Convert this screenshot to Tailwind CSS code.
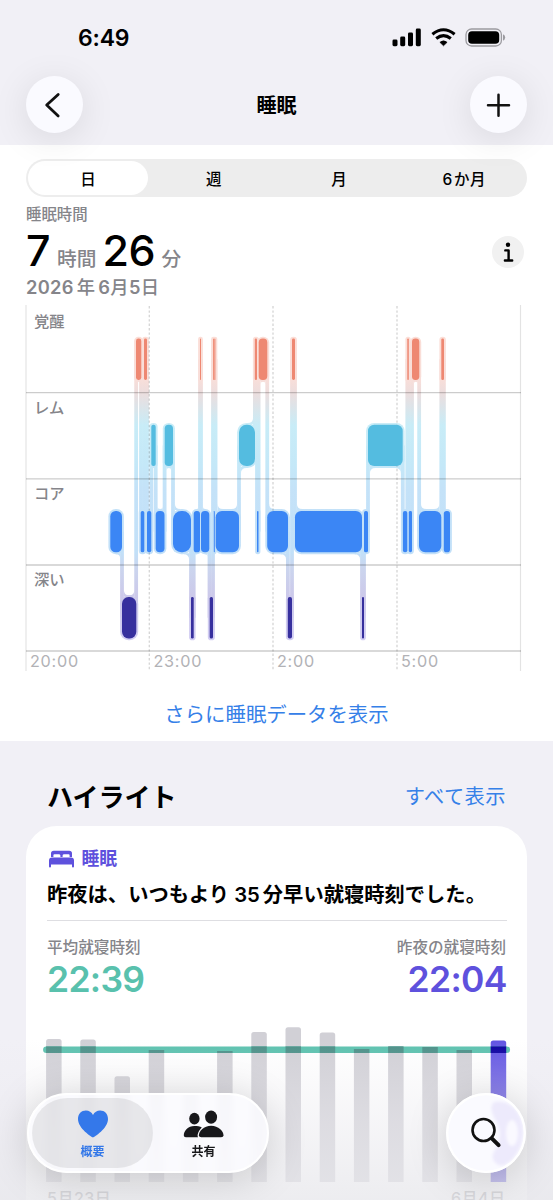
<!DOCTYPE html>
<html lang="ja">
<head>
<meta charset="utf-8">
<title>睡眠</title>
<script src="https://cdn.jsdelivr.net/npm/@tailwindcss/browser@4"></script>
</head>
<body class="bg-[#f1f0f6] font-['Inter','Noto_Sans_CJK_JP',sans-serif] text-black">
<div class="relative flex h-[1200px] w-[553px] flex-col overflow-hidden">

  <header class="relative z-10 h-[145px] shrink-0">
    <div class="flex h-[75.5px] items-center justify-between pl-[78px] pr-[47px]">
      <span class="pt-[2px] text-[23px] font-semibold leading-none tracking-[-0.2px]">6:49</span>
      <div class="flex items-center gap-[9px]">
        <svg width="30" height="19" viewBox="0 0 30 19"><rect x="0.5" y="11.5" width="5" height="6.7" rx="1.4"/><rect x="8.2" y="8.6" width="5" height="9.6" rx="1.4"/><rect x="16" y="4.6" width="5" height="13.6" rx="1.4"/><rect x="23.8" y="0.6" width="5" height="17.6" rx="1.4"/></svg>
        <svg width="25" height="19" viewBox="0 0 25 19"><path d="M12.5 17.8 8.9 14.3Q12.5 11.4 16.1 14.3Z" stroke="#000" stroke-width=".6" stroke-linejoin="round"/><path d="M5.2 10.5Q12.5 4.6 19.8 10.5M1.4 6.3Q12.5-2.8 23.6 6.3" fill="none" stroke="#000" stroke-width="3.1"/></svg>
        <svg width="41" height="19" viewBox="0 0 41 19"><rect x="1" y="1" width="35.4" height="17" rx="5.6" fill="none" stroke="#9c9ba0" stroke-width="1.3"/><rect x="3.2" y="3.2" width="31" height="12.6" rx="3.8"/><path d="M38 6.3Q40.2 7.2 40.2 9.5T38 12.7Z" fill="#9c9ba0"/></svg>
      </div>
    </div>
    <div class="flex items-center justify-between px-[26px]">
      <button class="flex size-[57px] items-center justify-center rounded-full bg-[#fafaff] shadow-[0_6px_36px_rgba(0,0,0,0.10)]">
        <svg width="57" height="57" viewBox="0 0 57 57"><path d="M32.2 18.4 20.7 29.1 32.2 39.9" fill="none" stroke="#111" stroke-width="2.8" stroke-linecap="round" stroke-linejoin="round"/></svg>
      </button>
      <h1 class="pt-[3px] text-[20px] font-bold leading-none">睡眠</h1>
      <button class="flex size-[57px] items-center justify-center rounded-full bg-[#fafaff] shadow-[0_6px_36px_rgba(0,0,0,0.10)]">
        <svg width="57" height="57" viewBox="0 0 57 57"><path d="M18 29.3H39M28.5 18.8V39.8" fill="none" stroke="#111" stroke-width="2.5" stroke-linecap="round"/></svg>
      </button>
    </div>
  </header>

  <section class="flex h-[596px] shrink-0 flex-col bg-white pt-[14px]">
    <div class="mx-[26px] grid h-[38px] w-[501px] grid-cols-4 items-center rounded-full bg-[#ededed] text-center text-[15.5px] font-medium leading-none">
      <span class="ml-[2px] flex h-[34px] w-[120px] items-center justify-center rounded-full bg-white pt-[3px]">日</span>
      <span class="pt-[3px]">週</span><span class="pt-[3px]">月</span><span class="pt-[3px] tracking-[0.6px]">6<span class="ml-[1px]">か月</span></span>
    </div>
    <div class="flex h-[108px] items-start justify-between pl-[26px] pr-[29px]">
      <div class="pt-[9px]">
        <p class="h-[17px] text-[15.4px] font-medium leading-[17px] text-[#85858a]">睡眠時間</p>
        <p class="flex h-[54px] items-baseline text-[43px] font-medium leading-[54px]">
          <span class="w-[31px]">7</span><span class="w-[45.5px] text-[19.7px] text-[#85858a]">時間</span><span class="w-[59px] tracking-[-0.5px]">26</span><span class="text-[19.7px] text-[#85858a]">分</span>
        </p>
        <p class="h-[20px] text-[18.3px] font-semibold leading-[20px] tracking-[0.3px] text-[#85858a]">2026<span class="ml-[3px] font-medium">年</span><span class="ml-[3px]">6<span class="font-medium">月</span>5<span class="font-medium">日</span></span></p>
      </div>
      <button class="mt-[39px] size-[32px] rounded-full bg-[#f1f1f1]">
        <svg width="32" height="32" viewBox="0 0 32 32"><circle cx="16" cy="8.7" r="2.2"/><path d="M13.3 14.4H16.6V24.3M12.9 24.5H20.2" fill="none" stroke="#000" stroke-width="2.4" stroke-linecap="round" stroke-linejoin="round"/></svg>
      </button>
    </div>
    <svg id="sleep" width="553" height="375" viewBox="0 305 553 375" class="shrink-0">
      <defs><linearGradient id="halo" gradientUnits="userSpaceOnUse" x1="0" y1="337" x2="0" y2="641">
        <stop offset="0" stop-color="#fbded7"/><stop offset=".14" stop-color="#f8ded9"/><stop offset=".18" stop-color="#eddddd"/><stop offset=".29" stop-color="#c8ecf7"/><stop offset=".42" stop-color="#c4e8f8"/><stop offset=".5" stop-color="#c4e2f8"/><stop offset=".71" stop-color="#c2e0f8"/><stop offset=".76" stop-color="#cbd5ee"/><stop offset=".85" stop-color="#ccc9ea"/><stop offset="1" stop-color="#d2cdf3"/>
      </linearGradient></defs>
      <g id="halos" fill="url(#halo)"></g>
      <path d="M26 392.7H521M26 478.8H521M26 565H521M26 651H521" stroke="#000" stroke-opacity=".2" stroke-width="1.3"/>
      <path d="M26 305V671M520.5 305V671" stroke="#000" stroke-opacity=".11" stroke-width="1.2"/>
      <path d="M149.3 306V671M273 306V671M397 306V671" stroke="#000" stroke-opacity=".17" stroke-width="1.3" stroke-dasharray="2.4 2"/>
      <g id="stages"></g>
      <g font-size="15.3" font-weight="500" fill="#85858a"><text x="34" y="327">覚醒</text><text x="34" y="413">レム</text><text x="34" y="499">コア</text><text x="34" y="585">深い</text></g>
      <g font-size="16.2" font-weight="400" fill="#b2b2b6" letter-spacing=".75"><text x="30" y="667">20:00</text><text x="153.5" y="667">23:00</text><text x="277" y="667">2:00</text><text x="401" y="667">5:00</text></g>
    </svg>
    <p class="mt-[24px] text-center text-[20.4px] leading-[22px] text-[#3580e8]">さらに睡眠データを表示</p>
  </section>

  <section class="flex flex-1 flex-col px-[26px] pt-[40px]">
    <div class="flex h-[45px] items-start justify-between px-[21px]">
      <h2 class="pt-[1px] text-[26px] font-bold leading-[31px]">ハイライト</h2>
      <a class="text-[20.2px] leading-[31px] tracking-[0.5px] text-[#3580e8]">すべて表示</a>
    </div>
    <article class="h-[420px] shrink-0 rounded-[31px] bg-white px-[21px] pt-[22px]">
      <div class="flex h-[21px] items-center gap-[7.5px] text-[17.8px] font-bold leading-none text-[#5e51dd]">
        <svg class="ml-[2px]" width="25" height="18" viewBox="0 0 25 18" fill="#5e51dd"><path d="M2 7V3.6Q2 .8 4.8.8H20.2Q23 .8 23 3.6V7H20.6V5.2Q20.6 4.2 19.6 4.2H15.2Q13.6 4.2 13.6 5.6V7H11.4V5.6Q11.4 4.2 9.8 4.2H5.4Q4.4 4.2 4.4 5.2V7Z"/><path d="M0 10.6Q0 7.6 3 7.6H22Q25 7.6 25 10.6V16.6Q25 17.6 24 17.6T23 16.6V14.6H2V16.6Q2 17.6 1 17.6T0 16.6Z"/></svg>
        <span class="pt-[1px]">睡眠</span>
      </div>
      <p class="mt-[15px] h-[20px] whitespace-nowrap text-[20.3px] font-bold leading-[21px]">昨夜は、いつもより<span class="ml-[5px] mr-[3px] font-semibold">35</span>分早い就寝時刻でした。</p>
      <hr class="mt-[16px] w-[460px] border-[#dedee2]">
      <div class="mt-[18px] flex justify-between text-[15.6px] font-medium leading-[18px] text-[#85858a]"><span>平均就寝時刻</span><span>昨夜の就寝時刻</span></div>
      <div class="mt-[4px] flex justify-between text-[35.5px] font-semibold leading-[38px] tracking-[-0.7px]"><span class="text-[#59c1ad]">22:39</span><span class="-mr-[0.7px] text-[#5e51dd]">22:04</span></div>
      <svg class="-ml-[5px] mt-[23px]" width="470" height="185" viewBox="42 1022 470 185">
        <g id="bars" fill="#d1d0d6"></g>
        <path d="M46.4 1049.7H506.8" stroke="#5bc1ae" stroke-width="6.6" stroke-linecap="round"/>
        <g id="cross" fill="#4b8f87"></g>
        <g font-size="16" font-weight="500" fill="#97979c" letter-spacing=".5"><text x="47" y="1204">5月23日</text><text x="451" y="1204">6月4日</text></g>
      </svg>
    </article>
  </section>

  <div class="absolute inset-x-0 bottom-0 h-[160px] bg-linear-to-b from-[#eeedf2]/0 via-[#ebeaef]/45 to-[#e8e8ec]/80"></div>

  <nav class="absolute left-[27px] top-[1093px] flex h-[80px] w-[242px] items-center overflow-visible rounded-full border-2 border-white bg-[#fbfbff]/85 pl-[3px] shadow-[0_5px_40px_rgba(0,0,0,0.17)] backdrop-blur-[3px]">
    <div class="flex h-[70px] w-[121px] flex-col items-center rounded-full bg-black/8 pt-[12px] text-[#3478e8]">
      <svg width="30" height="28" viewBox="0 0 30 28" fill="#3478ea"><path d="M15 27.6C13.8 27.1 0 18.6 0 9.1 0 4 3.4.6 7.9.6 11 .6 13.6 2.2 15 4.9 16.4 2.2 19 .6 22.1.6 26.6.6 30 4 30 9.1 30 18.6 16.2 27.1 15 27.6Z"/></svg>
      <span class="mt-[7px] text-[12px] font-bold leading-[14px]">概要</span>
    </div>
    <div class="flex w-[101px] flex-col items-center pt-[2px] text-[#18181b]">
      <svg width="42" height="28" viewBox="0 0 42 28" fill="#18181b"><ellipse cx="11.4" cy="8.7" rx="5.2" ry="5.9"/><path d="M18.8 17.4C17 19.1 15.1 21.8 14.6 25.1 14.5 26 14.7 26.8 15 27.2H2.8Q.8 27.2.8 25.5C.8 21 5 16 11.4 16 14.4 16 17 16.5 18.8 17.4Z"/><ellipse cx="28.1" cy="7.1" rx="6" ry="6.6"/><path d="M18.3 27.2Q15.9 27.2 15.9 25.4C15.9 21 20.8 15.8 28.1 15.8S40.5 21 40.5 25.4Q40.5 27.2 38.1 27.2Z"/></svg>
      <span class="mt-[7px] text-[12px] font-bold leading-[14px]">共有</span>
    </div>
  </nav>

  <button class="absolute left-[446px] top-[1093px] size-[80px] overflow-visible rounded-full bg-[#fafaff] shadow-[0_5px_40px_rgba(0,0,0,0.17)]">
    <svg width="80" height="80" viewBox="0 0 80 80"><defs><filter id="soft"><feGaussianBlur stdDeviation="1.6"/></filter></defs>
      <path d="M48 9Q59 7 68 15 78 26 77 42 75 60 62 70 54 76 48 68Q44 63 51 54 57 40 50 28 42 14 48 9Z" fill="#edeafc" filter="url(#soft)"/><ellipse cx="66" cy="40" rx="6" ry="13" fill="#faf9ff" filter="url(#soft)"/>
      <circle cx="40" cy="40" r="38.8" fill="none" stroke="#fff" stroke-width="2.2"/>
      <circle cx="37.5" cy="37" r="11" fill="none" stroke="#111" stroke-width="2.6"/><path d="M45.8 45.4 52.6 52.2" stroke="#111" stroke-width="4" stroke-linecap="round"/></svg>
  </button>
</div>

<script>
const NS = 'http://www.w3.org/2000/svg';
function add(id, tag, attrs) {
  const e = document.createElementNS(NS, tag);
  for (const k in attrs) e.setAttribute(k, attrs[k]);
  document.getElementById(id).appendChild(e);
}
// Sleep stages: [stage, start x, end x]; stages run 0 awake, 1 REM, 2 core, 3 deep
const tops = [338.6, 424.8, 511, 597.1], H = 41.3, P = 1.9;
const colors = ['#ee8872', '#54bce0', '#3b86f5', '#37309e'];
const night = [
  [2,110.3,122],[3,122,136.3],[0,136,141.3],[2,140.7,144.3],[0,144,147],[2,147,151.3],[1,151.3,155.7],
  [2,155.7,164.5],[1,164.7,173],[2,173,191],[3,191,193.7],[2,193.7,200],[0,200,201],[2,201,209.3],
  [3,209.7,213],[0,213,213.9],[2,213.8,214.8],[0,214.3,215.4],[2,215.7,239],[1,239,255],[0,254.8,257],[2,257,258.5],
  [0,258.7,267.3],[2,267.2,288],[3,287.8,292],[0,292,295],[2,295,362],[3,362,364],[2,364,368],
  [1,368,402.7],[2,402.9,407.3],[0,407.3,408.8],[2,408.8,412],[0,412,419.3],[2,419,441.3],[0,441.3,444],[2,443.8,450]
];
night.forEach(([s, a, b], i) => {
  const w = b - a, r = w < 19 ? w * 0.46 : 6.2, y = tops[s];
  add('halos', 'rect', {x: a - P, y: y - P, width: w + 2 * P, height: H + 2 * P, rx: Math.min(r + P, (w + 2 * P) / 2)});
  add('stages', 'rect', {x: a, y, width: w, height: H, rx: r, fill: colors[s]});
  const f = Math.max(0, Math.min(5.5, (w - 2 * P) / 2));
  // Rounded inner corner where a connector leaves a block
  const corner = (x, dir, other) => {
    if (f < 0.5) return;
    const down = other > s, yy = down ? y + H + P : y - P, v = down ? 1 : -1;
    add('halos', 'path', {d: `M${x} ${yy - v}V${yy + v * f}Q${x} ${yy} ${x + dir * f} ${yy}V${yy - v}Z`});
  };
  if (i) corner(a + P, 1, night[i - 1][0]);
  const n = night[i + 1];
  if (n) {
    corner(b - P, -1, n[0]);
    const t = (b + n[1]) / 2, y1 = Math.min(y, tops[n[0]]) + H / 2, y2 = Math.max(y, tops[n[0]]) + H / 2;
    add('halos', 'rect', {x: t - P, y: y1, width: 2 * P, height: y2 - y1});
  }
});
// Bedtime bars, one for each night
[1039,1039.5,1076.3,1050,1094,1051,1032,1027.3,1032.5,1049,1046,1047,1050,1040.5].forEach((y, i) => {
  const x = 46.1 + i * 34.2, last = i === 13;
  add('bars', 'path', {d: `M${x} 1182V${y + 2.5}q0-2.5 2.5-2.5h10.5q2.5 0 2.5 2.5V1182Z`, fill: last ? '#6255e3' : '#d1d0d6'});
  const t = Math.max(y, 1046.4);
  if (t < 1053) add('cross', 'rect', {x, y: t, width: 15.5, height: 1053 - t, fill: last ? '#0b00a0' : '#4b8f87'});
});
</script>
</body>
</html>
